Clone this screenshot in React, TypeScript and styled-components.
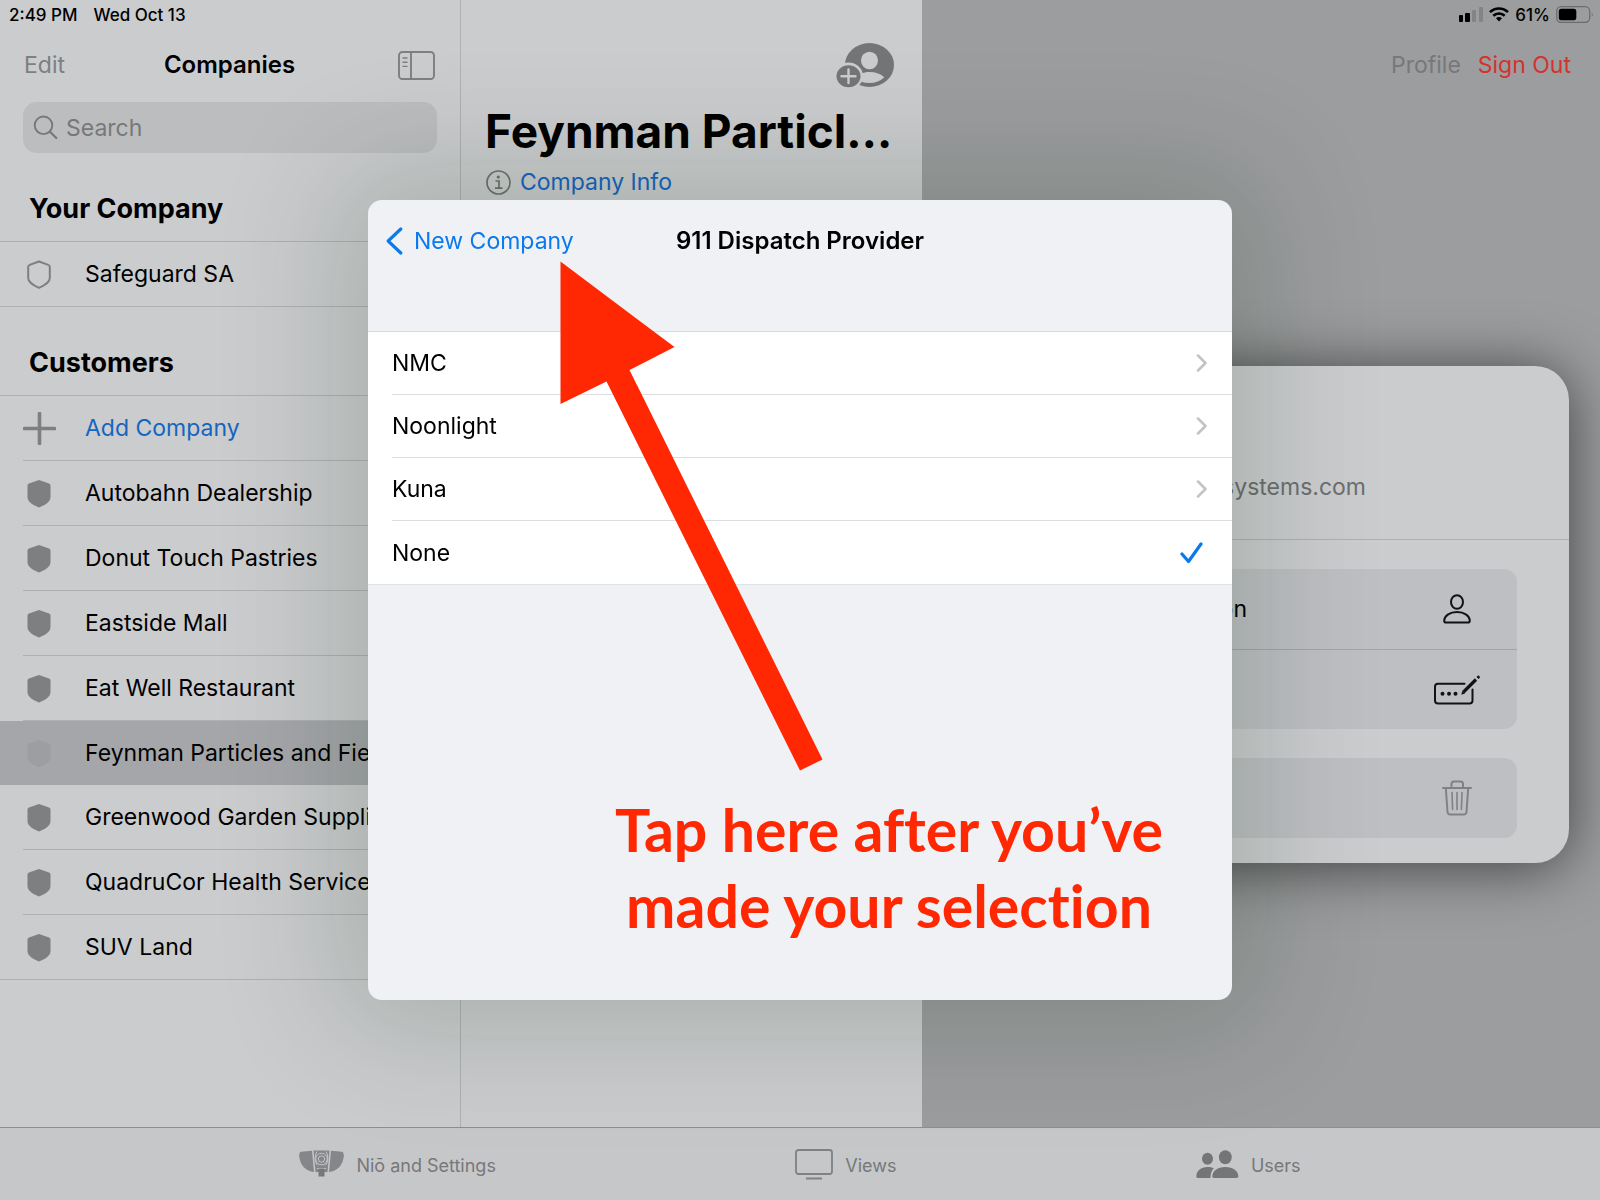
import React, { useState } from "react";
import styled, { createGlobalStyle } from "styled-components";

const color = {
  pane: "#cbccce",
  detail: "#9c9d9f",
  bar: "#c6c7c9",
  line: "#aeb0b2",
  gray: "#7e7f81",
  link: "#1565c0",
  blue: "#0b7aec",
  sheet: "#eff1f5",
  red: "#ff2803",
};

const GlobalStyle = createGlobalStyle`
  *, *::before, *::after { box-sizing: border-box; }
  body {
    margin: 0;
    font-family: Inter, "Liberation Sans", sans-serif;
    font-size: 23px;
    line-height: 32px;
    color: #000;
    background: ${color.bar};
  }
  button, input { font: inherit; color: inherit; }
  h1, h2, p, ul { margin: 0; padding: 0; }
  ul { list-style: none; }
`;

const Page = styled.div`
  display: flex;
  flex-direction: column;
  min-height: 100vh;
  overflow: hidden;
`;

const Columns = styled.div`
  display: grid;
  grid-template-columns: 461px 461px minmax(0, 1fr);
  flex: 1;
`;

const Pane = styled.section<{ $divided?: boolean }>`
  display: flex;
  flex-direction: column;
  background: ${color.pane};
  border-right: ${(p) => (p.$divided ? `1px solid ${color.line}` : "none")};
`;

const Detail = styled.main`
  display: flex;
  flex-direction: column;
  background: ${color.detail};
`;

const StatusBar = styled.div<{ $end?: boolean }>`
  display: flex;
  align-items: center;
  justify-content: ${(p) => (p.$end ? "flex-end" : "flex-start")};
  gap: ${(p) => (p.$end ? "6px" : "16px")};
  height: 28px;
  padding: 1px 6px 0 9px;
  font-size: 17px;
  font-weight: 500;
  line-height: 28px;
`;

const NavRow = styled.header`
  display: grid;
  grid-template-columns: 1fr auto 1fr;
  align-items: center;
  height: 74px;
  padding: 0 25px 0 24px;
`;

const NavTitle = styled.h1`
  font-size: 24px;
  font-weight: 600;
`;

const PlainButton = styled.button<{ $color?: string; $end?: boolean }>`
  display: inline-flex;
  align-items: center;
  justify-self: ${(p) => (p.$end ? "end" : "start")};
  padding: 0;
  border: 0;
  background: none;
  color: ${(p) => p.$color ?? color.gray};
  cursor: pointer;
`;

const SearchField = styled.label`
  display: flex;
  align-items: center;
  gap: 8px;
  height: 51px;
  margin: 0 23px;
  padding: 0 10px;
  border-radius: 14px;
  background: #bcbdbf;
  color: #77787b;
`;

const SearchInput = styled.input`
  flex: 1;
  min-width: 0;
  padding: 0;
  border: 0;
  outline: 0;
  background: none;
  &::placeholder { color: #77787b; opacity: 1; }
`;

const SectionTitle = styled.h2`
  padding: 40px 29px 16px;
  font-size: 27px;
  font-weight: 700;
  line-height: 32px;
`;

const CompanyList = styled.ul`
  border-top: 1px solid ${color.line};
  border-bottom: 1px solid ${color.line};
`;

const CompanyItem = styled.li<{ $selected?: boolean }>`
  padding-left: 23px;
  background: ${(p) => (p.$selected ? "#a5a6aa" : "none")};
  color: ${(p) => (p.$selected ? "#9d9ea1" : color.gray)};
`;

const CompanyButton = styled.button<{ $line: boolean; $link?: boolean }>`
  display: grid;
  grid-template-columns: 32px minmax(0, 1fr);
  align-items: center;
  justify-items: center;
  column-gap: 30px;
  width: 100%;
  height: ${(p) => (p.$line ? "65px" : "64px")};
  padding: 0;
  border: 0;
  border-bottom: ${(p) => (p.$line ? `1px solid ${color.line}` : "0")};
  background: none;
  text-align: left;
  cursor: pointer;
  & > span {
    justify-self: stretch;
    color: ${(p) => (p.$link ? color.link : "#000")};
    white-space: nowrap;
    overflow: hidden;
  }
`;

const GroupActions = styled.div`
  display: flex;
  justify-content: flex-end;
  padding: 42px 28px 0 0;
`;

const GroupTitle = styled.h1`
  padding: 13px 28px 0 24px;
  font-size: 46px;
  font-weight: 700;
  line-height: 60px;
  white-space: nowrap;
`;

const InfoLink = styled.a`
  display: flex;
  align-items: center;
  gap: 9px;
  padding: 5px 25px;
  color: ${color.link};
  text-decoration: none;
`;

const AccountRow = styled.nav`
  display: flex;
  align-items: center;
  justify-content: flex-end;
  gap: 17px;
  height: 74px;
  padding-right: 29px;
`;

const UserCard = styled.article`
  margin: 264px 31px 0;
  padding-bottom: 25px;
  border-radius: 34px;
  background: ${color.pane};
  box-shadow: 0 4px 60px rgba(0, 0, 0, 0.6);
`;

const UserCardHeader = styled.div`
  height: 174px;
  padding: 105px 203px 0 0;
  border-bottom: 1px solid ${color.line};
  color: #6d6e70;
  text-align: right;
`;

const ActionGroup = styled.ul`
  margin: 29px 52px 0;
  border-radius: 13px;
  background: #bebfc3;
`;

const ActionItem = styled.li`
  height: 80px;
  & + & { border-top: 1px solid #a3a4a8; }
`;

const ActionButton = styled.button<{ $color?: string }>`
  display: grid;
  grid-template-columns: 1fr 64px;
  align-items: center;
  column-gap: 178px;
  width: 100%;
  height: 100%;
  padding: 0 28px 0 0;
  border: 0;
  background: none;
  color: ${(p) => p.$color ?? "#000"};
  text-align: right;
  cursor: pointer;
  & > svg { grid-column: 2; justify-self: center; }
`;

const TabBar = styled.nav`
  display: flex;
  justify-content: space-evenly;
  align-items: center;
  height: 73px;
  border-top: 1px solid #8e8f92;
  background: ${color.bar};
`;

const TabLink = styled.a`
  display: flex;
  align-items: center;
  gap: 12px;
  color: #77787a;
  font-size: 18px;
  text-decoration: none;
  & > span { padding-top: 4px; }
`;

const Overlay = styled.div`
  position: fixed;
  inset: 0;
  display: grid;
  place-items: center;
`;

const Sheet = styled.div`
  position: relative;
  width: 864px;
  max-width: 100%;
  min-height: 800px;
  border-radius: 14px;
  background: ${color.sheet};
  box-shadow: 0 0 120px 34px rgba(0, 35, 0, 0.16);
`;

const SheetHeader = styled.header`
  display: grid;
  grid-template-columns: 1fr auto 1fr;
  align-items: center;
  height: 81px;
  margin-bottom: 50px;
  padding: 0 18px;
`;

const BackButton = styled(PlainButton)`
  gap: 11px;
`;

const ProviderList = styled.ul`
  border-top: 1px solid #d8dadc;
  border-bottom: 1px solid #dfe2e4;
  background: #fff;
`;

const ProviderItem = styled.li`
  padding-left: 24px;
`;

const ProviderButton = styled.button<{ $line: boolean }>`
  display: flex;
  align-items: center;
  justify-content: space-between;
  width: 100%;
  height: 63px;
  padding: 0 24px 0 0;
  border: 0;
  border-bottom: ${(p) => (p.$line ? "1px solid #dcdddf" : "0")};
  background: none;
  cursor: pointer;
`;

const Arrow = styled.svg`
  position: absolute;
  top: 61px;
  left: 192px;
  pointer-events: none;
`;

const Callout = styled.p`
  position: absolute;
  top: 592px;
  left: 178px;
  right: 0;
  color: ${color.red};
  font-family: Lato, "Liberation Sans", sans-serif;
  font-size: 59px;
  font-weight: 700;
  font-variant-ligatures: none;
  line-height: 76px;
  text-align: center;
  white-space: pre-line;
  pointer-events: none;
`;

const shieldPath = "M12 1 L22 4.6 Q23.5 5.2 23.5 6.8 V18 C23.5 23 18 26 12 28.6 C6 26 .5 23 .5 18 V6.8 Q.5 5.2 2 4.6 Z";

const Shield = ({ outline }: { outline?: boolean }) => (
  <svg width="24" height="29" viewBox="0 0 24 29" fill="none" aria-hidden="true">
    {outline ? (
      <path
        d="M12 1.5 L21.3 4.9 Q22.8 5.4 22.8 7 V18 C22.8 22.5 17.5 25.4 12 27.8 C6.5 25.4 1.2 22.5 1.2 18 V7 Q1.2 5.4 2.7 4.9 Z"
        stroke="currentColor"
        strokeWidth="2"
        strokeLinejoin="round"
      />
    ) : (
      <path d={shieldPath} fill="currentColor" />
    )}
  </svg>
);

const Plus = () => (
  <svg width="33" height="33" viewBox="0 0 33 33" aria-hidden="true">
    <path d="M16.5 1.5 V31.5 M1.5 16.5 H31.5" stroke="currentColor" strokeWidth="3.6" strokeLinecap="round" />
  </svg>
);

const SidebarIcon = () => (
  <svg width="37" height="29" viewBox="0 0 37 29" fill="none" stroke="currentColor" aria-hidden="true">
    <rect x="1" y="1" width="35" height="27" rx="3.5" strokeWidth="1.9" />
    <path d="M13 1 V28" strokeWidth="1.9" />
    <path d="M4.5 7 H9.5 M4.5 11.2 H9.5 M4.5 15.4 H9.5" strokeWidth="1.4" />
  </svg>
);

const SearchIcon = () => (
  <svg width="25" height="25" viewBox="0 0 25 25" fill="none" stroke="currentColor" aria-hidden="true">
    <circle cx="10.5" cy="10.3" r="8.8" strokeWidth="1.9" />
    <path d="M17 16.8 L23.3 23" strokeWidth="2.3" strokeLinecap="round" />
  </svg>
);

const AddUserIcon = () => (
  <svg width="58" height="46" viewBox="0 0 58 46" aria-hidden="true">
    <ellipse cx="33.5" cy="23" rx="24.5" ry="22" fill="#747577" />
    <ellipse cx="33.5" cy="18.5" rx="8.5" ry="8.7" fill={color.pane} />
    <path d="M19 36 C22 32.5 27 30 33.5 30 C40 30 45 32 48.3 35.2 C44.5 39 39.5 41 33.5 41 C27.5 41 22.5 39.5 19 36 Z" fill={color.pane} />
    <ellipse cx="12.5" cy="34" rx="14.5" ry="13.5" fill={color.pane} />
    <ellipse cx="12.5" cy="34.2" rx="12" ry="11" fill="#747577" />
    <path d="M12.5 27.5 V41 M5.5 34.2 H19.5" stroke={color.pane} strokeWidth="2.4" strokeLinecap="round" />
  </svg>
);

const InfoIcon = () => (
  <svg width="25" height="25" viewBox="0 0 25 25" fill="none" stroke="#6e726e" aria-hidden="true">
    <circle cx="12.5" cy="12.5" r="11.5" strokeWidth="1.7" />
    <circle cx="12.3" cy="7" r="1.6" fill="#6e726e" stroke="none" />
    <path d="M9.5 11 H13 V18 M9 18.2 H16.5" strokeWidth="1.7" />
  </svg>
);

const SignalIcon = () => (
  <svg width="24" height="15" viewBox="0 0 24 15" aria-hidden="true">
    <rect x="0" y="8" width="4" height="7" rx="1" />
    <rect x="6" y="6" width="5" height="9" rx="1" />
    <rect x="13" y="3" width="4" height="12" rx="1" fill="#838486" />
    <rect x="20" y="0" width="4" height="15" rx="1" fill="#838486" />
  </svg>
);

const WifiIcon = () => (
  <svg width="20" height="15" viewBox="0 0 20 15" fill="none" stroke="#000" strokeWidth="2.6" aria-hidden="true">
    <path d="M1 5.2 C6 .2 14 .2 19 5.2" />
    <path d="M4.3 8.8 C7.5 5.7 12.5 5.7 15.7 8.8" />
    <path d="M7 11.3 C8.8 9.7 11.2 9.7 13 11.3 L10 14.6 Z" fill="#000" stroke="none" />
  </svg>
);

const BatteryIcon = () => (
  <svg width="38" height="17" viewBox="0 0 38 17" fill="none" aria-hidden="true">
    <rect x=".7" y=".7" width="33" height="15.6" rx="4.5" stroke="#6c6d6f" strokeWidth="1.3" />
    <rect x="2.8" y="2.8" width="17.5" height="11.4" rx="2.5" fill="#000" />
    <path d="M35.8 6 Q37.5 8.5 35.8 11 Z" fill="#6c6d6f" />
  </svg>
);

const PersonIcon = () => (
  <svg width="28" height="30" viewBox="0 0 28 30" fill="none" stroke="#111214" strokeWidth="2" strokeLinejoin="round" aria-hidden="true">
    <ellipse cx="14" cy="8" rx="6" ry="6.8" />
    <path d="M1.2 26.8 C1.2 22 6.5 18 14 18 C21.5 18 26.8 22 26.8 26.8 Q26.8 28.6 25 28.6 H3 Q1.2 28.6 1.2 26.8 Z" />
  </svg>
);

const PasscodeIcon = () => (
  <svg width="48" height="32" viewBox="0 0 48 32" fill="none" stroke="#111214" aria-hidden="true">
    <path d="M31.5 9.8 H5 Q2 9.8 2 12.8 V26.5 Q2 29.5 5 29.5 H36.5 Q39.5 29.5 39.5 26.5 V15.5" strokeWidth="2" strokeLinecap="round" />
    <path d="M30.5 18 L43 5.5" strokeWidth="3.2" />
    <path d="M28.3 20.8 L29.3 16.8 L32 19.4 Z" fill="#111214" stroke="none" />
    <path d="M44.5 4 L46.3 2.3" strokeWidth="2.8" />
    <g fill="#111214" stroke="none">
      <circle cx="9.5" cy="19.8" r="2" />
      <circle cx="16" cy="19.8" r="2" />
      <circle cx="22.5" cy="19.8" r="2" />
    </g>
  </svg>
);

const TrashIcon = () => (
  <svg width="30" height="36" viewBox="0 0 30 36" fill="none" stroke="currentColor" strokeWidth="2" strokeLinecap="round" aria-hidden="true">
    <path d="M1 8 H29 M3.8 8 L5.5 32 Q5.8 34.5 8.3 34.5 H21.7 Q24.2 34.5 24.5 32 L26.2 8" />
    <path d="M9.5 8 V4 Q9.5 1.5 12 1.5 H18.5 Q21 1.5 21 4 V8" />
    <path d="M10 12.5 L10.6 29.5 M15 12.5 V29.5 M20 12.5 L19.4 29.5" strokeWidth="1.6" />
  </svg>
);

const DeviceIcon = () => (
  <svg width="45" height="29" viewBox="0 0 45 29" aria-hidden="true">
    <path d="M1 3 Q0 2 2 1.8 L13 .8 L15 22 C7 21 1 16 0 5 Z M44 3 Q45 2 43 1.8 L32 .8 L30 22 C38 21 44 16 45 5 Z" fill="#85868a" />
    <path d="M14.5 .5 H30.5 L28.5 22 H16.5 Z" fill="#85868a" />
    <g fill="none" stroke={color.bar} strokeWidth="1">
      <path d="M18 1.5 C15.5 5 15.5 13 19 15.5 M27 1.5 C29.5 5 29.5 13 26 15.5 M18 18.5 H27" />
      <circle cx="22.5" cy="9" r="5.8" />
      <circle cx="22.5" cy="9" r="3.2" />
    </g>
    <rect x="19.5" y="18.500" width="6" height="8" fill="#77787b" />
  </svg>
);

const DisplayIcon = () => (
  <svg width="38" height="31" viewBox="0 0 38 31" fill="none" stroke="#808184" aria-hidden="true">
    <rect x="1" y="1" width="36" height="24" rx="2.5" strokeWidth="1.8" />
    <path d="M11 29.5 H27" strokeWidth="2" />
  </svg>
);

const UsersIcon = () => (
  <svg width="43" height="29" viewBox="0 0 43 29" fill="#747577" aria-hidden="true">
    <ellipse cx="11.5" cy="8.7" rx="5.5" ry="6" />
    <path d="M.3 26.5 C.3 21 5 17 11.5 17 C14 17 16 17.4 17.8 18.3 C15.5 20.8 14.5 23.5 14.5 28 H2 Q.3 28 .3 26.5 Z" />
    <ellipse cx="29.3" cy="7.3" rx="6.4" ry="7" />
    <path d="M16.3 26.3 C16.3 21 21.5 17 29.3 17 C37 17 42.3 21 42.3 26.3 Q42.3 28 40.6 28 H18 Q16.3 28 16.3 26.3 Z" />
  </svg>
);

const BackChevron = () => (
  <svg width="17" height="28" viewBox="0 0 17 28" fill="none" stroke={color.blue} strokeWidth="3.2" strokeLinecap="round" strokeLinejoin="round" aria-hidden="true">
    <path d="M14.8 2 L2.2 14 L14.8 26" />
  </svg>
);

const RowChevron = () => (
  <svg width="12" height="18" viewBox="0 0 12 18" fill="none" stroke="#c2c3c5" strokeWidth="2.5" strokeLinecap="round" strokeLinejoin="round" aria-hidden="true">
    <path d="M2 1.5 L9.500 9 L2 16.5" />
  </svg>
);

const CheckMark = () => (
  <svg width="28" height="22" viewBox="0 0 28 22" fill="none" stroke={color.blue} strokeWidth="3.2" strokeLinecap="round" strokeLinejoin="round" aria-hidden="true">
    <path d="M2 12 L8.500 19.5 L21 2" />
  </svg>
);

const customers = [
  "Autobahn Dealership",
  "Donut Touch Pastries",
  "Eastside Mall",
  "Eat Well Restaurant",
  "Feynman Particles and Fields",
  "Greenwood Garden Supplies",
  "QuadruCor Health Services",
  "SUV Land",
];
const current = 4;
const providers = ["NMC", "Noonlight", "Kuna", "None"];

export default function App() {
  const [provider, setProvider] = useState("None");

  return (
    <>
      <GlobalStyle />
      <Page>
        <Columns>
          <Pane $divided>
            <StatusBar>
              <span>2:49 PM</span>
              <span>Wed Oct 13</span>
            </StatusBar>
            <NavRow>
              <PlainButton>Edit</PlainButton>
              <NavTitle>Companies</NavTitle>
              <PlainButton $end aria-label="Toggle sidebar">
                <SidebarIcon />
              </PlainButton>
            </NavRow>
            <SearchField>
              <SearchIcon />
              <SearchInput type="text" placeholder="Search" aria-label="Search" />
            </SearchField>

            <SectionTitle>Your Company</SectionTitle>
            <CompanyList>
              <CompanyItem>
                <CompanyButton $line={false}>
                  <Shield outline />
                  <span>Safeguard SA</span>
                </CompanyButton>
              </CompanyItem>
            </CompanyList>

            <SectionTitle>Customers</SectionTitle>
            <CompanyList>
              <CompanyItem>
                <CompanyButton $line $link>
                  <Plus />
                  <span>Add Company</span>
                </CompanyButton>
              </CompanyItem>
              {customers.map((name, i) => (
                <CompanyItem key={name} $selected={i === current}>
                  <CompanyButton $line={i !== current && i < customers.length - 1}>
                    <Shield />
                    <span>{name}</span>
                  </CompanyButton>
                </CompanyItem>
              ))}
            </CompanyList>
          </Pane>

          <Pane>
            <GroupActions>
              <PlainButton aria-label="Add user">
                <AddUserIcon />
              </PlainButton>
            </GroupActions>
            <GroupTitle>Feynman Particl…</GroupTitle>
            <InfoLink href="#info">
              <InfoIcon />
              Company Info
            </InfoLink>
          </Pane>

          <Detail>
            <StatusBar $end>
              <SignalIcon />
              <WifiIcon />
              <span>61%</span>
              <BatteryIcon />
            </StatusBar>
            <AccountRow>
              <PlainButton $color="#77787a">Profile</PlainButton>
              <PlainButton $color="#d0342c">Sign Out</PlainButton>
            </AccountRow>
            <UserCard>
              <UserCardHeader>systems.com</UserCardHeader>
              <ActionGroup>
                <ActionItem>
                  <ActionButton>
                    <span>on</span>
                    <PersonIcon />
                  </ActionButton>
                </ActionItem>
                <ActionItem>
                  <ActionButton aria-label="Change passcode">
                    <PasscodeIcon />
                  </ActionButton>
                </ActionItem>
              </ActionGroup>
              <ActionGroup>
                <ActionItem>
                  <ActionButton $color="#808184" aria-label="Delete">
                    <TrashIcon />
                  </ActionButton>
                </ActionItem>
              </ActionGroup>
            </UserCard>
          </Detail>
        </Columns>

        <TabBar>
          <TabLink href="#settings">
            <DeviceIcon />
            <span>Niō and Settings</span>
          </TabLink>
          <TabLink href="#views">
            <DisplayIcon />
            <span>Views</span>
          </TabLink>
          <TabLink href="#users">
            <UsersIcon />
            <span>Users</span>
          </TabLink>
        </TabBar>
      </Page>

      <Overlay>
        <Sheet role="dialog" aria-label="911 Dispatch Provider">
          <SheetHeader>
            <BackButton $color={color.blue}>
              <BackChevron />
              New Company
            </BackButton>
            <NavTitle as="h2">911 Dispatch Provider</NavTitle>
          </SheetHeader>
          <ProviderList>
            {providers.map((name, i) => (
              <ProviderItem key={name}>
                <ProviderButton
                  $line={i < providers.length - 1}
                  aria-pressed={provider === name}
                  onClick={() => setProvider(name)}
                >
                  {name}
                  {provider === name ? <CheckMark /> : <RowChevron />}
                </ProviderButton>
              </ProviderItem>
            ))}
          </ProviderList>
          <Arrow width="264" height="510" viewBox="0 0 264 510" aria-hidden="true">
            <path d="M.5 .5 V143 L46.5 120.5 L240 509.5 L262.5 498.5 L69.5 109 L114.5 86 Z" fill={color.red} />
          </Arrow>
          <Callout>{"Tap here after you’ve\nmade your selection"}</Callout>
        </Sheet>
      </Overlay>
    </>
  );
}
